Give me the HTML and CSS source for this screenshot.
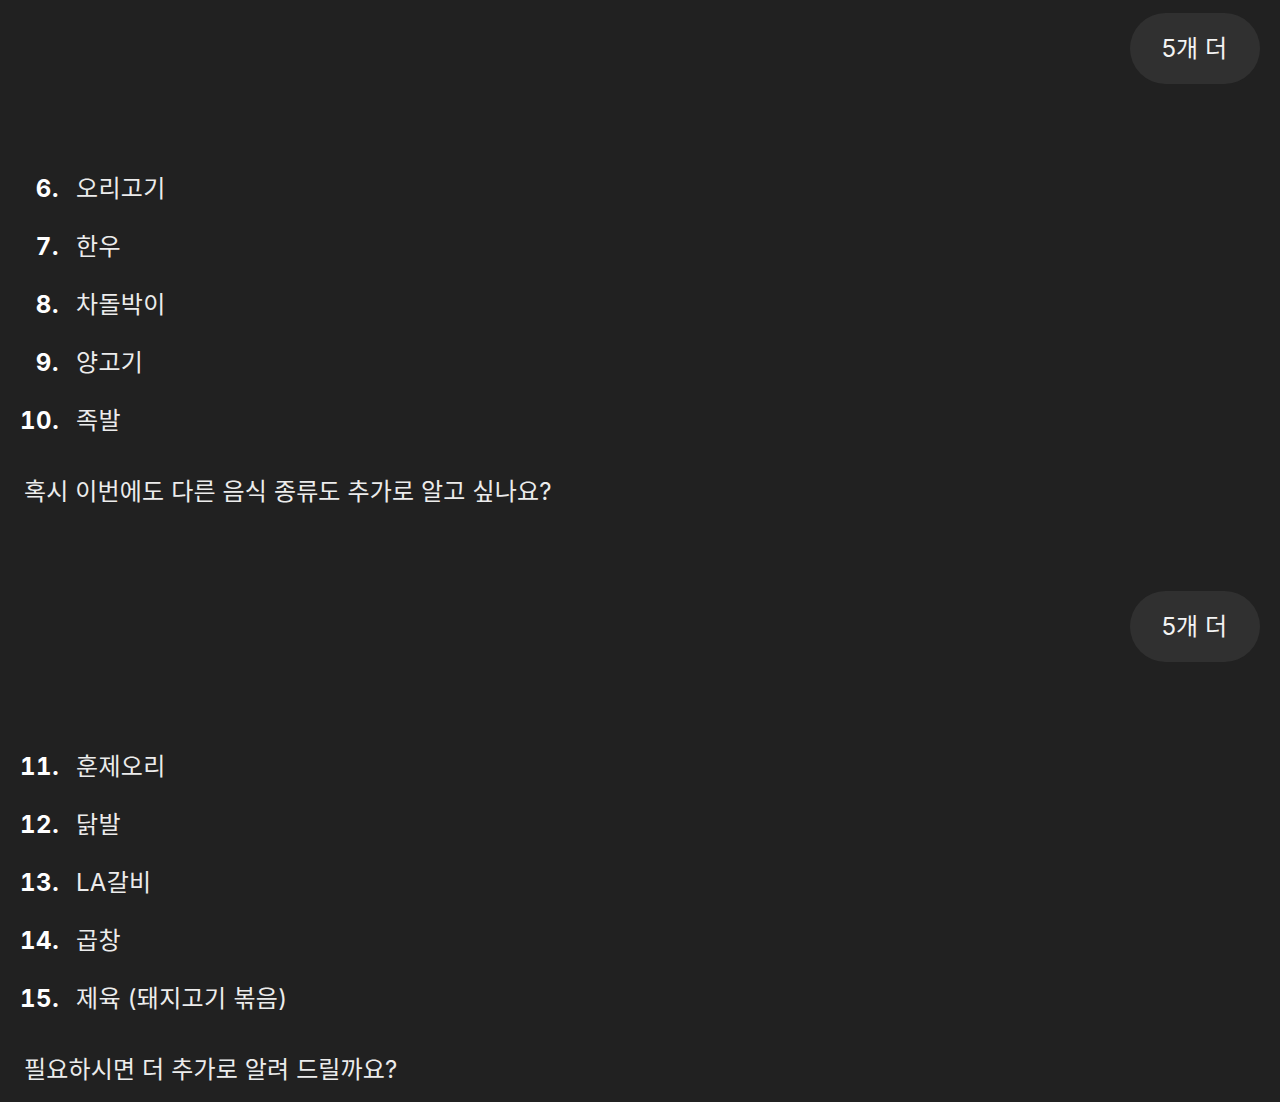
FILE: index.html
```html
<!DOCTYPE html>
<html lang="ko">
<head>
<meta charset="utf-8">
<title>Chat</title>
<link rel="stylesheet" href="styles.css">
</head>
<body>
<main class="thread">
  <div class="user-row"><div class="bubble">5개 더</div></div>
  <div class="reply">
    <ol class="list">
      <li><span class="num">6.</span><span class="item">오리고기</span></li>
      <li><span class="num">7.</span><span class="item">한우</span></li>
      <li><span class="num">8.</span><span class="item">차돌박이</span></li>
      <li><span class="num">9.</span><span class="item">양고기</span></li>
      <li><span class="num">10.</span><span class="item">족발</span></li>
    </ol>
    <p class="para">혹시 이번에도 다른 음식 종류도 추가로 알고 싶나요?</p>
  </div>
  <div class="user-row"><div class="bubble">5개 더</div></div>
  <div class="reply">
    <ol class="list">
      <li><span class="num">11.</span><span class="item">훈제오리</span></li>
      <li><span class="num">12.</span><span class="item">닭발</span></li>
      <li><span class="num">13.</span><span class="item">LA갈비</span></li>
      <li><span class="num">14.</span><span class="item">곱창</span></li>
      <li><span class="num">15.</span><span class="item">제육 (돼지고기 볶음)</span></li>
    </ol>
    <p class="para">필요하시면 더 추가로 알려 드릴까요?</p>
  </div>
</main>
</body>
</html>
```
FILE: styles.css
```css
html, body {
  margin: 0;
  padding: 0;
  background: #212121;
}
body {
  font-family: "Inter", "Noto Sans CJK KR", sans-serif;
  font-size: 24px;
  line-height: 36px;
  color: #ececec;
}
.thread {
  padding: 14px 20px 0 20px;
  display: flex;
  flex-direction: column;
}
.user-row {
  display: flex;
  justify-content: flex-end;
}
.bubble {
  background: #303030;
  border-radius: 36px;
  height: 71px;
  padding: 0 33px 0 32px;
  margin-top: -1px;
  display: flex;
  align-items: center;
  color: #f3f3f3;
}
.reply {
  margin-top: 87px;
  margin-bottom: 82px;
}
.list {
  list-style: none;
  margin: 0;
  padding: 0;
  display: flex;
  flex-direction: column;
  gap: 22px;
}
.list li {
  display: grid;
  grid-template-columns: 40px auto;
  column-gap: 16px;
}
.num {
  text-align: right;
  font-weight: 700;
  color: #ffffff;
  white-space: nowrap;
  font-variant-numeric: tabular-nums;
  letter-spacing: 0.6px;
  margin-right: 1px;
}
.item {
  letter-spacing: 0.3px;
}
.para {
  margin: 35px 0 0 4px;
  letter-spacing: 0.15px;
}
```
